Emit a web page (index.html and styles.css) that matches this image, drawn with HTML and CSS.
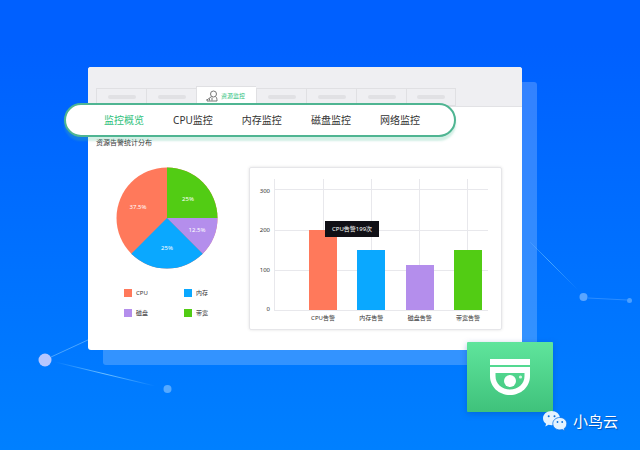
FILE: index.html
```html
<!DOCTYPE html>
<html lang="zh-CN">
<head>
<meta charset="utf-8">
<meta name="viewport" content="width=device-width, initial-scale=1">
<title>资源监控</title>
<link rel="stylesheet" href="styles.css">
</head>
<body>
<svg class="network" viewBox="0 0 640 450" preserveAspectRatio="xMidYMid slice" aria-hidden="true">
  <defs>
    <linearGradient id="fade" gradientUnits="userSpaceOnUse" x1="55" y1="0" x2="155" y2="0">
      <stop offset="0" stop-color="#6fc0ff" stop-opacity="0"/>
      <stop offset=".5" stop-color="#6fc0ff"/>
      <stop offset="1" stop-color="#6fc0ff" stop-opacity="0"/>
    </linearGradient>
    <linearGradient id="fade-right" gradientUnits="userSpaceOnUse" x1="530" y1="0" x2="578" y2="0">
      <stop offset="0" stop-color="#4aa8ff" stop-opacity=".2"/>
      <stop offset=".4" stop-color="#4aa8ff"/>
      <stop offset="1" stop-color="#4aa8ff" stop-opacity="0"/>
    </linearGradient>
  </defs>
  <path d="M51 357 90 339" stroke="#4aa5ff"/>
  <path d="M55 362 155 386" stroke="url(#fade)"/>
  <path d="M530 242 578 290" stroke="url(#fade-right)"/>
  <path d="M588 298 627 300" stroke="#2c8dff"/>
  <circle cx="45" cy="360" r="6.5" fill="#b5c6ff"/>
  <circle cx="167.5" cy="389" r="4" fill="#56a9ff"/>
  <circle cx="583.5" cy="297" r="4" fill="#5ba6ff"/>
  <circle cx="629.5" cy="300.5" r="2.5" fill="#4b9fff"/>
</svg>

<main class="stage">
  <section class="window">
    <header class="tabs">
      <span class="tab"></span>
      <span class="tab"></span>
      <a class="tab tab-active" href="#monitor">
        <svg class="tab-icon" viewBox="0 0 12 12" aria-hidden="true">
          <circle cx="7.5" cy="4" r="3"/>
          <path d="M5.5 6.500 1 10M9.500 6.500c1.100.8 1.500 2 1.500 4.500H1V9M3.500 8.500v2M6 7.500v3"/>
        </svg>
        资源监控
      </a>
      <span class="tab"></span>
      <span class="tab"></span>
      <span class="tab"></span>
      <span class="tab"></span>
    </header>

    <nav class="subnav">
      <a class="current" href="#overview">监控概览</a>
      <a href="#cpu">CPU监控</a>
      <a href="#memory">内存监控</a>
      <a href="#disk">磁盘监控</a>
      <a href="#network">网络监控</a>
    </nav>

    <h1 class="title">资源告警统计分布</h1>

    <div class="panels">
      <div class="share">
        <svg class="pie" viewBox="0 0 102 102" role="img" aria-label="资源告警占比">
          <circle cx="51" cy="51" r="50.5" fill="#ff795b"/>
          <path d="M51 51V.5A50.5 50.5 0 0 1 101.5 51Z" fill="#52cc14"/>
          <path d="M51 51H101.5A50.5 50.5 0 0 1 86.7 86.7Z" fill="#b48eec"/>
          <path d="M51 51 86.7 86.7A50.5 50.5 0 0 1 15.3 86.7Z" fill="#0aa8ff"/>
          <text x="22" y="42">37.5%</text>
          <text x="72" y="34">25%</text>
          <text x="81" y="65">12.5%</text>
          <text x="51" y="83">25%</text>
        </svg>
        <ul class="legend">
          <li><i class="swatch red"></i>CPU</li>
          <li><i class="swatch blue"></i>内存</li>
          <li><i class="swatch purple"></i>磁盘</li>
          <li><i class="swatch green"></i>带宽</li>
        </ul>
      </div>

      <div class="chart">
        <div class="scale"><span>300</span><span>200</span><span>100</span><span>0</span></div>
        <div class="plot">
          <div class="column"><div class="bar red" style="height:61%"><span class="tooltip">CPU告警199次</span></div></div>
          <div class="column"><div class="bar blue" style="height:46%"></div></div>
          <div class="column"><div class="bar purple" style="height:34%"></div></div>
          <div class="column"><div class="bar green" style="height:46%"></div></div>
        </div>
        <div class="names"><span>CPU告警</span><span>内存告警</span><span>磁盘告警</span><span>带宽告警</span></div>
      </div>
    </div>

    <div class="badge">
      <svg viewBox="0 0 40 36" aria-hidden="true">
        <path fill="#fff" fill-rule="evenodd" d="M0 0H40V6H0ZM0 8H40V17C40 28 31 36 20 36S0 28 0 17ZM5.500 14V17C5.500 25 12 30.500 20 30.500S34.500 25 34.500 17V14Z"/>
        <circle cx="20" cy="22" r="6" fill="#fff"/>
        <circle cx="30.5" cy="18" r="1.6" fill="#d4f8e2"/>
      </svg>
    </div>
  </section>
</main>

<footer class="brand">
  <svg viewBox="0 0 24 20" aria-hidden="true">
    <path fill="#e4f3ff" d="M8.500 0C3.800 0 0 3.200 0 7.200c0 2.300 1.200 4.200 3.100 5.500L2.300 15.500l3.200-1.700c1 .3 2 .4 3.200.4C13 14 17 11 17 7.200 17 3.200 13.200 0 8.500 0Z"/>
    <path fill="#e4f3ff" stroke="#0b74e8" stroke-width=".8" d="M16.800 6.500c-4 0-7 2.800-7 6.200s3 6.200 7 6.200c.9 0 1.700-.1 2.500-.4l2.500 1.300-.6-2.200c1.700-1.200 2.600-2.900 2.600-4.900 0-3.400-3-6.200-7-6.200Z"/>
    <g fill="#0b6fd8"><circle cx="5.7" cy="5.200" r="1"/><circle cx="11.5" cy="5.200" r="1"/><circle cx="14.5" cy="11" r=".9"/><circle cx="19.200" cy="11" r=".9"/></g>
  </svg>
  <span>小鸟云</span>
</footer>
</body>
</html>
```
FILE: styles.css
```css
* {
  box-sizing: border-box;
}

body {
  margin: 0;
  min-height: 100vh;
  position: relative;
  background: linear-gradient(#0060ff 10%, #0080ff);
  color: #333;
  font-family: "Noto Sans", "Noto Sans CJK SC", sans-serif;
  font-size: 6px;
  line-height: 8px;
}

a {
  color: inherit;
  text-decoration: none;
}

.network {
  position: absolute;
  inset: 0;
  width: 100%;
  height: 100%;
  fill: none;
}

.stage {
  padding: 67px 118px 100px 88px;
}

.window {
  position: relative;
  padding-bottom: 20px;
  border-radius: 3px;
  background: #fff;
  box-shadow: 15px 15px 0 rgba(255, 255, 255, .2);
}

.tabs {
  display: flex;
  align-items: flex-end;
  height: 40px;
  padding: 0 8px;
  border-bottom: 1px solid #e2e2e5;
  border-radius: 3px 3px 0 0;
  background: #efeff2;
}

.tab {
  display: flex;
  align-items: center;
  justify-content: center;
  width: 50px;
  height: 18px;
  border: 1px solid #e0e0e3;
  border-right: 0;
}

.tab:last-child {
  border-right: 1px solid #e0e0e3;
}

.tab:not(.tab-active)::before {
  content: "";
  width: 28px;
  height: 4px;
  border-radius: 2px;
  background: #e1e1e4;
}

.tab-active {
  gap: 3px;
  width: 60px;
  height: 20px;
  padding-right: 2px;
  background: #fff;
  color: #2fbf7c;
}

.tab-icon {
  width: 12px;
  height: 12px;
  fill: none;
  stroke: #777;
}

.subnav {
  position: relative;
  display: flex;
  align-items: center;
  justify-content: space-between;
  height: 34px;
  margin: -4px 66px 0 -24px;
  padding: 0 34px 0 38px;
  border: 2px solid #4fb592;
  border-radius: 17px;
  background: #fff;
  box-shadow: 0 4px 2px rgba(80, 190, 150, .25);
  font-size: 10px;
  line-height: 16px;
}

.current {
  color: #2fbf7c;
}

.title {
  margin: 2px 8px 0;
  font-size: 7px;
  font-weight: 400;
  line-height: 8px;
}

.panels {
  display: flex;
  justify-content: space-between;
  margin: 20px 20px 0 28px;
}

.share {
  width: 102px;
}

.pie {
  display: block;
  width: 102px;
  height: 102px;
}

.pie text {
  fill: #fff;
  text-anchor: middle;
}

.legend {
  display: grid;
  grid-template-columns: 1fr 1fr;
  gap: 12px 18px;
  margin: 20px 0 0;
  padding: 0 8px;
  list-style: none;
}

.legend li {
  display: flex;
  gap: 4px;
  width: 42px;
}

.swatch {
  width: 8px;
  height: 8px;
}

.red { background: #ff795b; }
.blue { background: #0aa8ff; }
.purple { background: #b48eec; }
.green { background: #52cc14; }

.chart {
  display: grid;
  grid-template-columns: 20px 1fr;
  grid-template-rows: 132px auto;
  column-gap: 4px;
  width: 253px;
  height: 163px;
  padding: 11px 13px 0 0;
  border: 1px solid #e6e6e9;
  border-radius: 2px;
  box-shadow: 0 0 3px rgba(0, 0, 0, .12);
}

.scale {
  display: flex;
  flex-direction: column;
  justify-content: space-between;
  height: 126px;
  margin-top: 8px;
  text-align: right;
}

.plot,
.names {
  display: flex;
  justify-content: space-between;
  padding: 0 6px 0 34px;
  border-left: 1px solid transparent;
}

.plot {
  border-left-color: #e8e8ec;
  border-bottom: 1px solid #e8e8ec;
  background:
    linear-gradient(#e8e8ec, #e8e8ec) 0 10px / 100% 1px no-repeat,
    linear-gradient(#e8e8ec, #e8e8ec) 0 51px / 100% 1px no-repeat,
    linear-gradient(#e8e8ec, #e8e8ec) 0 91px / 100% 1px no-repeat;
}

.column {
  display: flex;
  align-items: flex-end;
  width: 28px;
  background: linear-gradient(#e8e8ec, #e8e8ec) center / 1px 100% no-repeat;
}

.bar {
  position: relative;
  width: 100%;
}

.tooltip {
  position: absolute;
  top: -9px;
  left: 16px;
  z-index: 1;
  padding: 4px 7px;
  background: #101016;
  color: #fff;
  white-space: nowrap;
}

.names {
  grid-column: 2;
  padding-top: 3px;
}

.names span {
  width: 28px;
  text-align: center;
}

.badge {
  position: absolute;
  right: -31px;
  bottom: -62px;
  display: grid;
  place-items: center;
  width: 86px;
  height: 70px;
  border-radius: 1px;
  background: linear-gradient(#5fe59c, #3fc27b);
  box-shadow: 0 2px 6px rgba(0, 70, 160, .35);
}

.badge svg {
  width: 40px;
  height: 36px;
}

.brand {
  position: absolute;
  right: 22px;
  bottom: 17px;
  display: flex;
  align-items: center;
  gap: 6px;
  color: #fff;
  font-size: 15px;
  line-height: 24px;
  text-shadow: 1px 1px 1px rgba(0, 40, 110, .5);
}

.brand svg {
  width: 24px;
  height: 20px;
}
```
